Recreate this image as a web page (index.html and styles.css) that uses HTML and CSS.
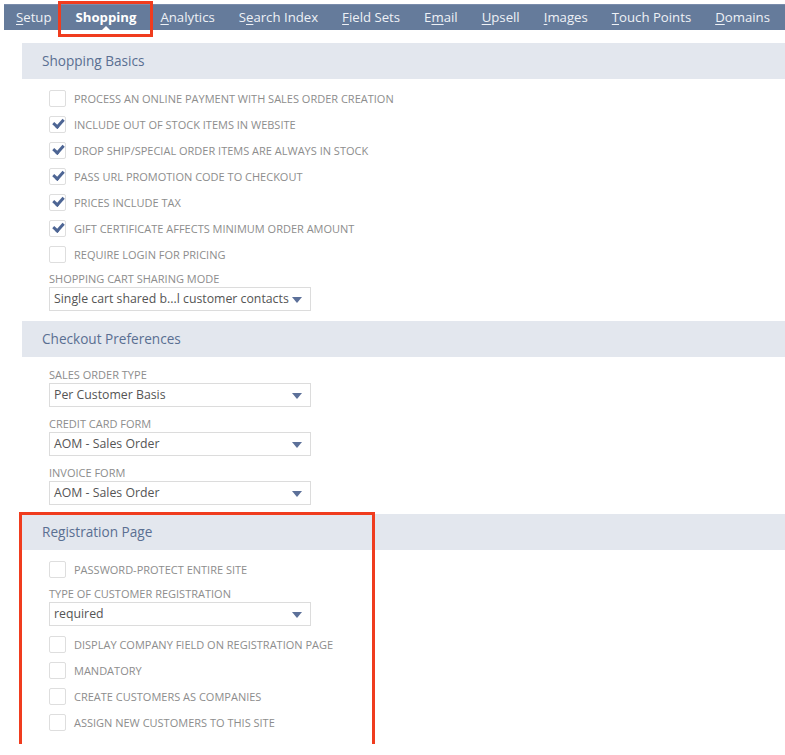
FILE: index.html
```html
<!DOCTYPE html>
<html lang="en">
<head>
  <meta charset="UTF-8" />
  <title>Web Site Setup - Shopping</title>
  <link rel="stylesheet" href="styles.css">
</head>
<body>

  <div class="tabs">
    <span class="tab"><u>S</u>etup</span>
    <span class="tab active">Shopping</span>
    <span class="tab"><u>A</u>nalytics</span>
    <span class="tab">S<u>e</u>arch Index</span>
    <span class="tab"><u>F</u>ield Sets</span>
    <span class="tab">E<u>m</u>ail</span>
    <span class="tab"><u>U</u>psell</span>
    <span class="tab"><u>I</u>mages</span>
    <span class="tab"><u>T</u>ouch Points</span>
    <span class="tab"><u>D</u>omains</span>
  </div>

  <div class="content">

    <!-- Shopping Basics -->
    <div class="section">
      <div class="section-head">Shopping Basics</div>
      <div class="section-body">
        <label class="check"><span class="box"></span>Process an online payment with sales order creation</label>
        <label class="check"><span class="box on"></span>Include out of stock items in website</label>
        <label class="check"><span class="box on"></span>Drop ship/special order items are always in stock</label>
        <label class="check"><span class="box on"></span>Pass URL promotion code to checkout</label>
        <label class="check"><span class="box on"></span>Prices include tax</label>
        <label class="check"><span class="box on"></span>Gift certificate affects minimum order amount</label>
        <label class="check"><span class="box"></span>Require login for pricing</label>
        <div class="field first">
          <div class="field-label">Shopping cart sharing mode</div>
          <div class="select">Single cart shared b...l customer contacts</div>
        </div>
      </div>
    </div>

    <!-- Checkout Preferences -->
    <div class="section">
      <div class="section-head">Checkout Preferences</div>
      <div class="section-body">
        <div class="field first">
          <div class="field-label">Sales order type</div>
          <div class="select">Per Customer Basis</div>
        </div>
        <div class="field">
          <div class="field-label">Credit card form</div>
          <div class="select">AOM - Sales Order</div>
        </div>
        <div class="field">
          <div class="field-label">Invoice form</div>
          <div class="select">AOM - Sales Order</div>
        </div>
      </div>
    </div>

    <!-- Registration Page -->
    <div class="section marked">
      <div class="section-head">Registration Page</div>
      <div class="section-body">
        <label class="check"><span class="box"></span>Password-protect entire site</label>
        <div class="field first spaced">
          <div class="field-label">Type of customer registration</div>
          <div class="select">required</div>
        </div>
        <label class="check"><span class="box"></span>Display company field on registration page</label>
        <label class="check"><span class="box"></span>Mandatory</label>
        <label class="check"><span class="box"></span>Create customers as companies</label>
        <label class="check"><span class="box"></span>Assign new customers to this site</label>
      </div>
      <div class="highlight"></div>
    </div>

  </div>

</body>
</html>
```

FILE: styles.css
```css
body {
  margin: 0;
  background: #fff;
  font-family: "Open Sans", "Liberation Sans", sans-serif;
  color: #555;
}

/* Thanh tab */
.tabs {
  display: flex;
  height: 26px;
  margin: 4px 0 0 4px;
  background: #657b9b;
  border-top: 1px solid #7a8cab;
  box-sizing: border-box;
}
.tab {
  position: relative;
  padding: 0 12px;
  color: #eef1f6;
  font-size: 13.2px;
  line-height: 24px;
  white-space: nowrap;
}
.tab u {
  text-decoration-thickness: 1px;
  text-underline-offset: 2px;
}
.tab.active {
  font-weight: 700;
  color: #fff;
}
.tab.active::before {
  content: "";
  position: absolute;
  left: -6px; right: -5px;
  top: -4px; bottom: -7px;
  border: 3px solid #f03c1e;
}
.tab.active::after {
  content: "";
  position: absolute;
  left: 50%;
  bottom: 0;
  margin-left: -4px;
  border-left: 4px solid transparent;
  border-right: 4px solid transparent;
  border-bottom: 4px solid #fff;
}

.content {
  padding: 13px 0 0 22px;
}

.section {
  position: relative;
  margin-bottom: 9px;
}
.section:first-child {
  margin-bottom: 10px;
}
.section-head {
  height: 36px;
  line-height: 36px;
  padding-left: 20px;
  background: #e3e7ee;
  color: #5a6f92;
  font-size: 13.6px;
}
.section-body {
  padding: 6px 0 0 27px;
}

.check {
  display: flex;
  align-items: center;
  height: 26px;
  color: #8d8d8d;
  font-size: 11px;
  text-transform: uppercase;
}
.box {
  position: relative;
  width: 15px;
  height: 15px;
  margin-right: 8px;
  border: 1px solid #dedede;
  border-radius: 2px;
  background: #fff;
}
.box.on::after {
  content: "";
  position: absolute;
  left: 3px;
  top: 2px;
  width: 8px;
  height: 4px;
  border-left: 3px solid #4d6594;
  border-bottom: 3px solid #4d6594;
  transform: rotate(-48deg);
}

.field {
  padding-top: 9px;
}
.field.first {
  padding-top: 4px;
}
.field.spaced {
  margin-bottom: 5px;
}
.field-label {
  height: 16px;
  line-height: 16px;
  color: #8d8d8d;
  font-size: 11px;
  text-transform: uppercase;
}
.select {
  position: relative;
  width: 262px;
  height: 24px;
  line-height: 22px;
  padding-left: 4px;
  box-sizing: border-box;
  border: 1px solid #dcdcdc;
  background: #fff;
  color: #555;
  font-size: 12.3px;
}
.select::after {
  content: "";
  position: absolute;
  right: 8px;
  top: 9px;
  border-left: 5px solid transparent;
  border-right: 5px solid transparent;
  border-top: 6px solid #5c7099;
}

/* Khung đỏ đánh dấu */
.highlight {
  position: absolute;
  left: -3px;
  top: -2px;
  width: 350px;
  height: 229px;
  border: 3px solid #f03c1e;
  pointer-events: none;
}
```
